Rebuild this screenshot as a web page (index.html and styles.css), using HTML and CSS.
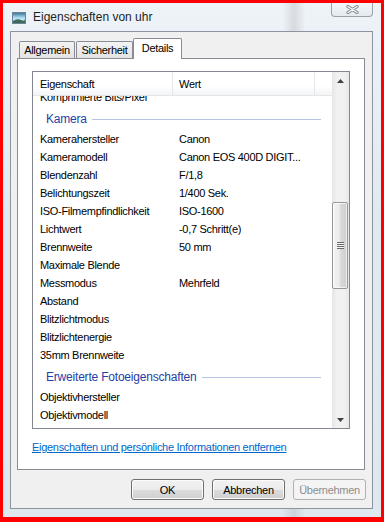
FILE: index.html
```html
<!DOCTYPE html>
<html lang="de">
<head>
    <meta charset="UTF-8">
    <meta name="viewport" content="width=device-width, initial-scale=1.0">
    <title>Eigenschaften von uhr</title>
    <link rel="stylesheet" href="styles.css">
</head>
<body>

    <div class="window">
        <!-- Title bar -->
        <div class="titlebar">
            <svg class="app-icon" width="14" height="12" viewBox="0 0 14 12">
                <defs>
                    <linearGradient id="sky" x1="0" y1="0" x2="0" y2="1">
                        <stop offset="0" stop-color="#2f6f8f"/>
                        <stop offset="0.45" stop-color="#a8d8ee"/>
                        <stop offset="0.7" stop-color="#cfeaf5"/>
                        <stop offset="1" stop-color="#3f6f66"/>
                    </linearGradient>
                </defs>
                <rect x="0.5" y="0.5" width="13" height="11" fill="url(#sky)" stroke="#6c8398"/>
                <path d="M1 9 Q5 6 9 8 T13 7 V11 H1 Z" fill="#3d6a5a"/>
            </svg>
            <span class="title">Eigenschaften von uhr</span>
            <div class="close">
                <svg width="13" height="9" viewBox="0 0 13 9">
                    <path d="M2 1.5 L11 7.5 M11 1.5 L2 7.5" stroke="#7a828c" stroke-width="3.2" stroke-linecap="round"/>
                    <path d="M2 1.5 L11 7.5 M11 1.5 L2 7.5" stroke="#ffffff" stroke-width="1.4" stroke-linecap="round"/>
                </svg>
            </div>
        </div>

        <!-- Dialog body -->
        <div class="client">
            <div class="tabs">
                <div class="tab tab-first">Allgemein</div>
                <div class="tab tab-second">Sicherheit</div>
                <div class="tab active">Details</div>
            </div>

            <div class="page">
                <div class="listview">
                    <div class="lv-main">
                        <div class="lv-header">
                            <div class="col-name">Eigenschaft</div>
                            <div class="col-value">Wert</div>
                            <div class="col-rest"></div>
                        </div>
                        <div class="lv-body">
                            <div class="lv-rows" id="rows"></div>
                        </div>
                    </div>
                    <div class="scrollbar">
                        <div class="sb-arrow">
                            <svg width="7" height="4" viewBox="0 0 7 4"><polygon points="3.5,0 7,4 0,4" fill="#404040"/></svg>
                        </div>
                        <div class="sb-track">
                            <div class="sb-thumb"><div class="sb-grip"></div></div>
                        </div>
                        <div class="sb-arrow">
                            <svg width="7" height="4" viewBox="0 0 7 4"><polygon points="0,0 7,0 3.5,4" fill="#404040"/></svg>
                        </div>
                    </div>
                </div>
                <a class="remove-link" href="#">Eigenschaften und persönliche Informationen entfernen</a>
            </div>

            <div class="buttons">
                <button>OK</button>
                <button>Abbrechen</button>
                <button disabled>Übernehmen</button>
            </div>
        </div>
    </div>

    <script>
        // Property rows of the Details tab
        const rows = [
            ["Komprimierte Bits/Pixel", ""],
            ["#Kamera"],
            ["Kamerahersteller", "Canon"],
            ["Kameramodell", "Canon EOS 400D DIGIT..."],
            ["Blendenzahl", "F/1,8"],
            ["Belichtungszeit", "1/400 Sek."],
            ["ISO-Filmempfindlichkeit", "ISO-1600"],
            ["Lichtwert", "-0,7 Schritt(e)"],
            ["Brennweite", "50 mm"],
            ["Maximale Blende", ""],
            ["Messmodus", "Mehrfeld"],
            ["Abstand", ""],
            ["Blitzlichtmodus", ""],
            ["Blitzlichtenergie", ""],
            ["35mm Brennweite", ""],
            ["#Erweiterte Fotoeigenschaften"],
            ["Objektivhersteller", ""],
            ["Objektivmodell", ""]
        ];

        const rowsEl = document.getElementById('rows');
        rows.forEach((row) => {
            const div = document.createElement('div');
            if (row[0].startsWith('#')) {
                div.className = 'group';
                div.innerHTML = `<span>${row[0].slice(1)}</span><i></i>`;
            } else {
                div.className = 'row';
                div.innerHTML = `<span class="cell-name">${row[0]}</span><span class="cell-value">${row[1]}</span>`;
            }
            rowsEl.appendChild(div);
        });
    </script>

</body>
</html>
```

FILE: styles.css
```css
html, body {
    margin: 0;
    padding: 0;
}
body {
    font-family: "Liberation Sans", Arial, sans-serif;
    font-size: 11px;
    letter-spacing: -0.3px;
    color: #000;
}
.window {
    width: 384px;
    height: 522px;
    box-sizing: border-box;
    border: 3px solid #ff0000;
    border-bottom-width: 5px;
    background:
        linear-gradient(90deg, rgba(255,255,255,0) 0%, rgba(255,255,255,0) 74%, rgba(150,150,150,0.25) 77%, rgba(255,255,255,0) 80%),
        linear-gradient(180deg, #eef3f8 0%, #e1e9f1 40%, #dfe7ef 100%);
    display: flex;
    flex-direction: column;
}

/* Title bar */
.titlebar {
    height: 28px;
    display: flex;
    align-items: center;
    padding: 0 8px 0 9px;
}
.app-icon {
    display: block;
    margin-top: 1px;
}
.title {
    margin-left: 7px;
    font-size: 12px;
    letter-spacing: 0;
    color: #1e1e1e;
}
.close {
    margin-left: auto;
    align-self: flex-start;
    width: 40px;
    height: 13px;
    border: 1px solid #9aa1aa;
    border-top: none;
    border-radius: 0 0 4px 4px;
    background: linear-gradient(#f4f7fa, #e4eaf0);
    display: flex;
    align-items: center;
    justify-content: center;
}
.close svg {
    display: block;
}

/* Client area */
.client {
    height: 478px;
    box-sizing: border-box;
    margin: 0 8px 0 7px;
    border: 1px solid #8c959f;
    background-color: #f0f0f0;
    padding: 6px 0 8px 6px;
    display: flex;
    flex-direction: column;
}

/* Tabs */
.tabs {
    height: 20px;
    display: flex;
    align-items: flex-end;
    padding-left: 2px;
}
.tab {
    height: 17px;
    box-sizing: border-box;
    border: 1px solid #898c95;
    border-bottom: none;
    border-radius: 2px 2px 0 0;
    background: linear-gradient(#f3f3f3, #e3e3e3);
    display: flex;
    align-items: center;
    justify-content: center;
    padding-bottom: 1px;
}
.tab-first {
    width: 56px;
}
.tab-second {
    width: 57px;
    margin-left: 1px;
}
.tab.active {
    width: 49px;
    height: 21px;
    margin-bottom: -1px;
    background: #fff;
    position: relative;
    z-index: 1;
    padding-bottom: 2px;
}

/* Tab page */
.page {
    width: 348px;
    height: 412px;
    box-sizing: border-box;
    border: 1px solid #898c95;
    background-color: #fff;
    padding: 12px 0 0 14px;
}

/* List view */
.listview {
    width: 318px;
    height: 358px;
    box-sizing: border-box;
    border: 1px solid #828790;
    display: flex;
}
.lv-main {
    width: 299px;
    display: flex;
    flex-direction: column;
}
.lv-header {
    height: 24px;
    box-sizing: border-box;
    border-bottom: 1px solid #e5e5e5;
    background: linear-gradient(#ffffff 0%, #ffffff 60%, #f3f4f6 100%);
    display: flex;
}
.lv-header div {
    display: flex;
    align-items: center;
    box-sizing: border-box;
}
.col-name {
    width: 140px;
    padding-left: 7px;
    border-right: 1px solid #e3e6ea;
}
.col-value {
    width: 142px;
    padding-left: 6px;
    border-right: 1px solid #e3e6ea;
}
.col-rest {
    flex: 1;
}
.lv-body {
    height: 332px;
    overflow: hidden;
}
.lv-rows {
    margin-top: -8px;
}
.row {
    height: 18px;
    display: flex;
    align-items: center;
}
.cell-name {
    width: 140px;
    padding-left: 7px;
    box-sizing: border-box;
    white-space: nowrap;
}
.cell-value {
    padding-left: 6px;
    white-space: nowrap;
}
.group {
    height: 24px;
    box-sizing: border-box;
    padding: 2px 11px 0 13px;
    display: flex;
    align-items: center;
    color: #1f40a6;
    font-size: 12px;
    letter-spacing: -0.2px;
}
.group i {
    flex: 1;
    height: 1px;
    margin-left: 5px;
    background-color: #b4c4e2;
}

/* Scrollbar */
.scrollbar {
    width: 17px;
    background: linear-gradient(90deg, #e6e6e6 0%, #f1f1f1 30%, #f1f1f1 70%, #e8e8e8 100%);
    display: flex;
    flex-direction: column;
}
.sb-arrow {
    height: 17px;
    display: flex;
    align-items: center;
    justify-content: center;
}
.sb-arrow svg {
    display: block;
}
.sb-track {
    flex: 1;
}
.sb-thumb {
    margin: 113px 0 0 0;
    width: 16px;
    height: 87px;
    box-sizing: border-box;
    border: 1px solid #979797;
    border-radius: 2px;
    background: linear-gradient(90deg, #f4f4f4 0%, #ebebeb 45%, #d9d9d9 55%, #cdcdcd 100%);
    box-shadow: inset 0 0 0 1px rgba(255,255,255,0.7);
    display: flex;
    align-items: center;
    justify-content: center;
}
.sb-grip {
    width: 7px;
    height: 7px;
    background: repeating-linear-gradient(180deg, #6a6a6a 0px, #6a6a6a 1px, #f5f5f5 1px, #f5f5f5 2px);
}

/* Link */
.remove-link {
    display: block;
    margin-top: 11px;
    line-height: 14px;
    color: #0066cc;
    text-decoration: underline;
}

/* Buttons */
.buttons {
    margin-top: 9px;
    padding-right: 6px;
    display: flex;
    justify-content: flex-end;
    gap: 8px;
}
.buttons button {
    width: 73px;
    height: 21px;
    font-family: "Liberation Sans", Arial, sans-serif;
    font-size: 11px;
    letter-spacing: -0.3px;
    color: #000;
    border: 1px solid #707070;
    border-radius: 3px;
    background: linear-gradient(#f2f2f2 0%, #ebebeb 50%, #dddddd 50%, #cfcfcf 100%);
    box-shadow: inset 0 0 0 1px #fbfbfb;
    padding: 0;
}
.buttons button:disabled {
    color: #8d8d8d;
    border-color: #adb2b5;
    background: #f4f4f4;
    box-shadow: none;
}
```
